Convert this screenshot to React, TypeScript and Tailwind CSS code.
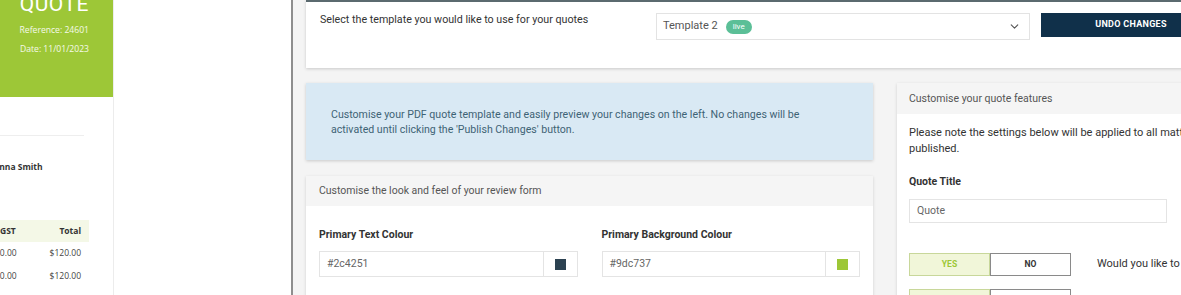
import React from 'react';
import { ChevronDown } from 'lucide-react';

const lines = [
  { gst: '$0.00', total: '$120.00' },
  { gst: '$0.00', total: '$120.00' },
];

const QuotePreview = () => (
  <div className="w-[293px] h-full shrink-0 bg-white border-r-2 border-[#8e8e8e]">
    <div className="w-[114px] h-full overflow-hidden border-r border-[#ececec] font-['Open_Sans',sans-serif]">
      <div className="h-[97px] bg-[#9dc737] flex flex-col items-end pr-[24px] text-white">
        <div className="-mt-[6px] text-[21px] leading-[21px] font-normal tracking-[0.5px] font-['Roboto',sans-serif]">QUOTE</div>
        <div className="mt-[9px] text-[8.6px] leading-[12px] text-white/90">Reference: 24601</div>
        <div className="mt-[7px] text-[8.6px] leading-[12px] text-white/90">Date: 11/01/2023</div>
      </div>
      <div className="mt-[38px] mr-[29px] border-t border-[#eeeeee]" />
      <div className="mt-[25px] -ml-[14px] text-[8.5px] leading-[12px] font-bold text-[#333]">Joanna Smith</div>
      <div className="mt-[47px] mr-[24px]">
        <div className="h-[22px] bg-[#f4f8e7] flex items-center justify-between pr-[8px] text-[8.5px] font-bold text-[#333]">
          <span>GST</span>
          <span>Total</span>
        </div>
        {lines.map((row, i) => (
          <div key={i} className="h-[23px] flex items-center justify-between pr-[8px] text-[8.5px] text-[#444]">
            <span className="-ml-[5px]">{row.gst}</span>
            <span>{row.total}</span>
          </div>
        ))}
      </div>
    </div>
  </div>
);

const ColourField = ({ label, value, swatch }: { label: string; value: string; swatch: string }) => (
  <div>
    <div className="text-[10.5px] leading-[14px] font-bold text-[#333] mb-[9px]">{label}</div>
    <div className="h-[26px] border border-[#e4e4e4] flex">
      <div className="flex-1 flex items-center px-[7px] text-[10.5px] text-[#666]">{value}</div>
      <div className="w-[34px] border-l border-[#e4e4e4] flex items-center justify-center">
        <div className="w-[11px] h-[11px]" style={{ backgroundColor: swatch }} />
      </div>
    </div>
  </div>
);

const Toggle = () => (
  <div className="flex">
    <div className="w-[81px] h-[23px] bg-[#f1f6d9] border border-[#c8d79a] flex items-center justify-center text-[8.5px] font-bold text-[#9dc737]">YES</div>
    <div className="w-[81px] h-[23px] bg-white border border-[#8a8a8a] flex items-center justify-center text-[8.5px] font-bold text-[#333]">NO</div>
  </div>
);

export default function App() {
  return (
    <div className="flex h-[295px] w-[1181px] overflow-hidden bg-white font-['Roboto',sans-serif]">
      <QuotePreview />

      <div className="flex-1 min-w-0 bg-[#f4f4f4] pl-[13px]">
        <div className="w-[1200px]">
          {/* template picker */}
          <div className="h-[68px] bg-white border-t-2 border-[#5b6a6f] shadow-[0_1px_3px_rgba(0,0,0,0.18)] flex items-start px-[14px] pt-[11px]">
            <div className="w-[336px] text-[10.7px] leading-[14px] text-[#333]">
              Select the template you would like to use for your quotes
            </div>
            <div className="w-[374px] h-[27px] border border-[#e3e3e3] flex items-center pl-[6px] pr-[8px]">
              <span className="text-[11px] text-[#555]">Template 2</span>
              <span className="ml-[8px] h-[14px] px-[7px] rounded-full bg-[#5bbf97] text-white text-[8px] flex items-center">live</span>
              <ChevronDown className="ml-auto text-[#555]" size={13} strokeWidth={2} />
            </div>
            <button className="ml-[11px] w-[180px] h-[24px] bg-[#10304a] text-white text-[9px] font-bold tracking-[0.3px]">
              UNDO CHANGES
            </button>
          </div>

          <div className="flex gap-[24px] mt-[15px]">
            <div className="w-[567px]">
              <div className="h-[77px] bg-[#d9e9f4] shadow-[0_1px_3px_rgba(0,0,0,0.18)] flex items-center px-[25px]">
                <p className="max-w-[490px] text-[10.6px] leading-[15px] text-[#3e6375]">
                  Customise your PDF quote template and easily preview your changes on the left. No changes will be activated until clicking the 'Publish Changes' button.
                </p>
              </div>

              <div className="mt-[16px] bg-white shadow-[0_1px_3px_rgba(0,0,0,0.15)] h-[200px]">
                <div className="h-[30px] bg-[#f5f5f5] flex items-center px-[13px] text-[10.5px] text-[#555]">
                  Customise the look and feel of your review form
                </div>
                <div className="px-[13px] pt-[22px] grid grid-cols-2 gap-x-[24px]">
                  <ColourField label="Primary Text Colour" value="#2c4251" swatch="#2c4251" />
                  <ColourField label="Primary Background Colour" value="#9dc737" swatch="#9dc737" />
                </div>
              </div>
            </div>

            <div className="w-[566px] bg-white shadow-[0_1px_3px_rgba(0,0,0,0.15)] h-[260px]">
              <div className="h-[31px] bg-[#f5f5f5] flex items-center px-[12px] text-[10.5px] text-[#555]">
                Customise your quote features
              </div>
              <div className="px-[12px] pt-[11px]">
                <p className="text-[11px] leading-[16px] text-[#333]">
                  Please note the settings below will be applied to all matters once your changes have been
                  <br />
                  published.
                </p>
                <div className="mt-[18px] text-[10.5px] leading-[14px] font-bold text-[#333]">Quote Title</div>
                <div className="mt-[10px] w-[258px] h-[24px] border border-[#e4e4e4] flex items-center px-[7px] text-[10.5px] text-[#666]">
                  Quote
                </div>
                <div className="mt-[30px] flex items-center">
                  <Toggle />
                  <span className="ml-[26px] text-[11px] text-[#333]">Would you like to display the quote reference?</span>
                </div>
                <div className="mt-[13px] flex items-center">
                  <Toggle />
                </div>
              </div>
            </div>
          </div>
        </div>
      </div>
    </div>
  );
}
